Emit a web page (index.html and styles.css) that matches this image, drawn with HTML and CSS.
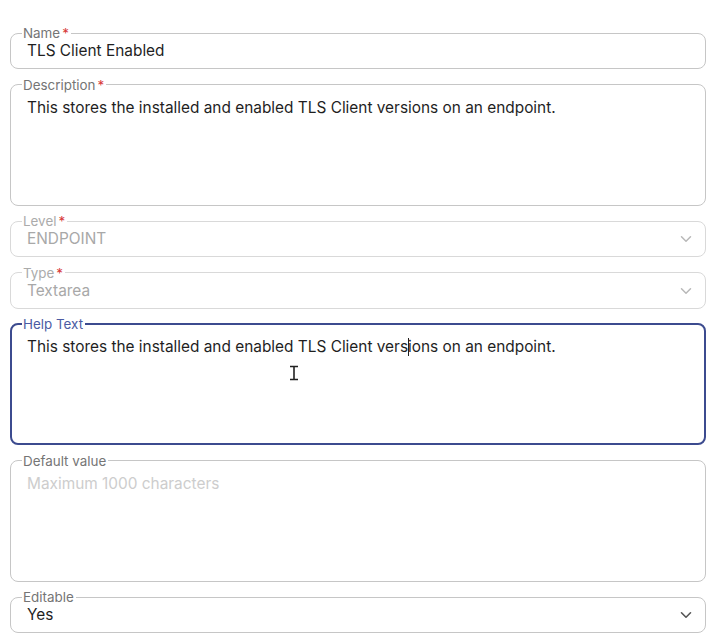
FILE: index.html
```html
<!DOCTYPE html>
<html lang="en">
<head>
<meta charset="utf-8">
<title>Custom field</title>
<link rel="stylesheet" href="styles.css">
</head>
<body>
<form class="form">
  <fieldset class="field">
    <legend class="label">Name<span class="req">*</span></legend>
    <div class="value">TLS Client Enabled</div>
  </fieldset>

  <fieldset class="field field-area">
    <legend class="label">Description<span class="req">*</span></legend>
    <div class="value">This stores the installed and enabled TLS Client versions on an endpoint.</div>
  </fieldset>

  <fieldset class="field field-select is-disabled">
    <legend class="label">Level<span class="req">*</span></legend>
    <div class="value">ENDPOINT</div>
    <svg class="chevron" width="12" height="8" viewBox="0 0 12 8"><path d="M1.5 1.8 6 6.2 10.5 1.8" fill="none" stroke="currentColor" stroke-width="1.5" stroke-linecap="round" stroke-linejoin="round"/></svg>
  </fieldset>

  <fieldset class="field field-select is-disabled">
    <legend class="label">Type<span class="req">*</span></legend>
    <div class="value">Textarea</div>
    <svg class="chevron" width="12" height="8" viewBox="0 0 12 8"><path d="M1.5 1.8 6 6.2 10.5 1.8" fill="none" stroke="currentColor" stroke-width="1.5" stroke-linecap="round" stroke-linejoin="round"/></svg>
  </fieldset>

  <fieldset class="field field-area is-focused">
    <legend class="label">Help Text</legend>
    <div class="value">This stores the installed and enabled TLS Client vers<span class="caret"></span>ions on an endpoint.</div>
    <svg class="ibeam" width="12" height="16" viewBox="0 0 12 16"><path d="M2 1.5h8M2 14.5h8M6 1.5v13" fill="none" stroke="#222" stroke-width="1.6"/></svg>
  </fieldset>

  <fieldset class="field field-area">
    <legend class="label">Default value</legend>
    <div class="value placeholder">Maximum 1000 characters</div>
  </fieldset>

  <fieldset class="field field-select">
    <legend class="label">Editable</legend>
    <div class="value">Yes</div>
    <svg class="chevron" width="12" height="8" viewBox="0 0 12 8"><path d="M1.5 1.8 6 6.2 10.5 1.8" fill="none" stroke="currentColor" stroke-width="1.6" stroke-linecap="round" stroke-linejoin="round"/></svg>
  </fieldset>
</form>
</body>
</html>
```

FILE: styles.css
```css
html, body {
  margin: 0;
  background: #ffffff;
}

body {
  font-family: Inter, "Noto Sans", "Liberation Sans", sans-serif;
  color: #1f1f1f;
}

.form {
  display: flex;
  flex-direction: column;
  gap: 8.5px;
  padding: 26px 6px 0 10px;
}

.field {
  position: relative;
  margin: 0;
  min-width: 0;
  border: 1px solid #c6c6c6;
  border-radius: 8px;
  padding: 1px 16px 7px 16px;
}

.label {
  padding: 0 2px 0 1px;
  margin-left: -5px;
  font-size: 13.4px;
  line-height: 14px;
  color: #757575;
}

.req {
  color: #d83a3a;
  margin-left: 2px;
}

.value {
  font-size: 15.4px;
  line-height: 20px;
  height: 20px;
  white-space: nowrap;
}

/* multi-line inputs: taller box, text sits a bit lower */
.field-area {
  box-sizing: content-box;
  padding-top: 6px;
  padding-bottom: 0;
  height: 120px;
}

.field-select .value {
  padding-right: 24px;
}

.chevron {
  position: absolute;
  right: 13px;
  top: 7px;
  color: #555555;
}

.is-disabled {
  border-color: #d9d9d9;
}

.is-disabled .label {
  color: #ababab;
}

.is-disabled .value {
  color: #a8a8a8;
}

.is-disabled .chevron {
  color: #b8b8b8;
}

.placeholder {
  color: #cdcdcd;
}

.is-focused {
  border: 2px solid #3c4b8f;
  padding-left: 15px;
  padding-right: 15px;
  padding-top: 6px;
  height: 118px;
}

.is-focused .label {
  color: #4b5ba3;
}

.caret {
  display: inline-block;
  width: 1px;
  height: 18px;
  margin: 0 -0.5px;
  vertical-align: -4px;
  background: #1f1f1f;
}

/* mouse pointer hovering over the focused textarea */
.ibeam {
  position: absolute;
  left: 276px;
  top: 34px;
}
```
